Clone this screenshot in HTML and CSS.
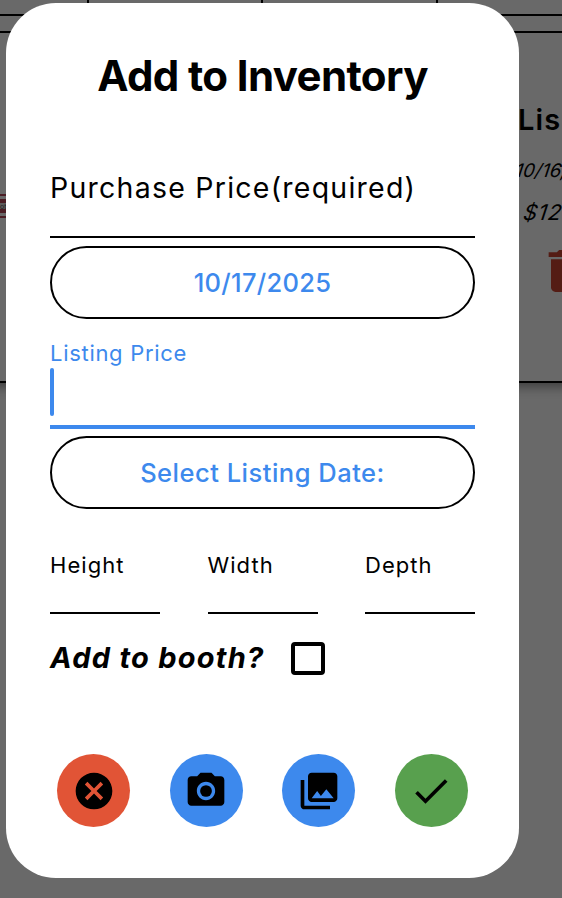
FILE: index.html
```html
<!DOCTYPE html>
<html lang="en">
<head>
<meta charset="utf-8">
<title>Add to Inventory</title>
<link rel="stylesheet" href="styles.css">
</head>
<body>
<div class="page">
  <div class="tabs"><div class="tab"></div><div class="tab"></div><div class="tab"></div><div class="tab"></div></div>
  <div class="card">
    <div class="thumb"><span class="thumb-text">ot</span></div>
    <div class="listing">
      <div class="listing-title">Lis</div>
      <div class="listing-date">10/16,</div>
      <div class="listing-price">$12</div>
      <svg class="trash" viewBox="0 0 24 24"><path d="M6 19c0 1.100.9 2 2 2h8c1.100 0 2-.9 2-2V7H6v12zM19 4h-3.500l-1-1h-5l-1 1H5v2h14V4z"/></svg>
    </div>
  </div>
</div>
<main class="dialog">
  <h1 class="title"><span>Add to Inventory</span></h1>
  <div class="field field-purchase"><span class="label-large">Purchase Price(required)</span></div>
  <button class="pill"><span class="date">10/17/2025</span></button>
  <div class="field field-listing"><span class="label-small">Listing Price</span><div class="caret"></div></div>
  <button class="pill"><span class="select">Select Listing Date:</span></button>
  <div class="dimensions">
    <div class="dim"><span class="height">Height</span></div>
    <div class="dim"><span class="width">Width</span></div>
    <div class="dim"><span class="depth">Depth</span></div>
  </div>
  <div class="booth"><span class="booth-label">Add to booth?</span><span class="checkbox"></span></div>
  <div class="actions">
    <button class="action red"><svg viewBox="0 0 24 24"><path d="M12 2C6.470 2 2 6.470 2 12s4.470 10 10 10 10-4.470 10-10S17.530 2 12 2zm5 13.590L15.590 17 12 13.410 8.410 17 7 15.590 10.590 12 7 8.410 8.410 7 12 10.590 15.590 7 17 8.410 13.410 12 17 15.590z"/></svg></button>
    <button class="action blue"><svg viewBox="0 0 24 24"><circle cx="12" cy="12" r="3.200"/><path d="M9 2L7.170 4H4c-1.100 0-2 .9-2 2v12c0 1.100.9 2 2 2h16c1.100 0 2-.9 2-2V6c0-1.100-.9-2-2-2h-3.170L15 2H9zm3 15c-2.760 0-5-2.240-5-5s2.240-5 5-5 5 2.240 5 5-2.240 5-5 5z"/></svg></button>
    <button class="action blue"><svg viewBox="0 0 24 24"><path d="M22 16V4c0-1.100-.9-2-2-2H8c-1.100 0-2 .9-2 2v12c0 1.100.9 2 2 2h12c1.100 0 2-.9 2-2zm-11-4l2.030 2.710L16 11l4 5H8l3-4zM2 6v14c0 1.100.9 2 2 2h14v-2H4V6H2z"/></svg></button>
    <button class="action green"><svg viewBox="0 0 24 24"><path d="M9 16.170L4.830 12l-1.420 1.410L9 19 21 7l-1.410-1.410z"/></svg></button>
  </div>
</main>
</body>
</html>
```
FILE: styles.css
```css
* { box-sizing: border-box; }
body { margin: 0; width: 562px; height: 898px; overflow: hidden; background: #696969; font-family: Inter, "Liberation Sans", sans-serif; color: #000; }
.page { width: 562px; height: 898px; overflow: hidden; }
.tabs { display: grid; grid-template-columns: 89px 174px 175px 1fr; height: 16px; border-bottom: 2px solid #000; }
.tab { border-right: 2px solid #000; }
.tab:last-child { border-right: 0; }
.card { display: flex; justify-content: space-between; margin: 15px -20px 0; padding: 0 20px; height: 352px; border-top: 2px solid #000; border-bottom: 2px solid #000; box-shadow: 0 10px 10px -6px rgba(0,0,0,.4); }
.thumb { width: 10px; height: 25px; margin-top: 161px; font-size: 7px; line-height: 7px; background: linear-gradient(#4b1d24 0 2px, #696969 2px 5px, #4b1d24 5px 9px, #5c5c5c 9px 15px, #4b1d24 15px 19px, #696969 19px 22px, #4b1d24 22px 24px, #696969 24px); }
.thumb-text { display: block; padding-top: 9px; color: #222; }
.listing { width: 44px; padding-top: 69px; white-space: nowrap; display: flex; flex-direction: column; }
.listing-title { font-size: 29px; font-weight: 600; line-height: 36px; letter-spacing: 1.1px; }
.listing-date { margin: 20px 0 0 -2px; font-size: 18.500px; line-height: 24px; letter-spacing: .3px; transform: skewX(-18deg); }
.listing-price { margin: 18px 0 0 6px; font-size: 21.500px; line-height: 24px; letter-spacing: 1.1px; transform: skewX(-18deg); }
.trash { width: 56px; height: 56px; margin: 19px 0 0 19px; fill: #541c14; flex: none; }
.dialog { position: absolute; left: 6px; top: 3px; width: 513px; height: 875px; border-radius: 50px; background: #fff; padding: 44px 44px 0; display: flex; flex-direction: column; }
.title { margin: 0; height: 60px; line-height: 58px; font-size: 42px; font-weight: 700; letter-spacing: -.62px; text-align: center; white-space: nowrap; }
.field { white-space: nowrap; flex: none; }
.field-purchase { height: 94px; margin-top: 37px; border-bottom: 2px solid #000; margin-bottom: 8px; }
.label-large { display: inline-block; margin-top: 26px; font-size: 28.500px; line-height: 36px; letter-spacing: 1.24px; }
.pill { display: flex; flex: none; align-items: center; justify-content: center; width: 425px; height: 73px; padding: 0; border: 2px solid #000; border-radius: 37px; background: #fff; color: #3d89ed; font: 500 25.500px Inter, sans-serif; }
.date { letter-spacing: .3px; }
.select { letter-spacing: .5px; }
.field-listing { height: 110px; border-bottom: 4px solid #3d89ed; margin-bottom: 7px; color: #3d89ed; }
.label-small { display: block; padding-top: 20px; line-height: 28px; font-size: 22px; letter-spacing: .7px; }
.caret { width: 4px; height: 48px; margin-top: 1px; border-radius: 2px; background: #3d89ed; }
.dimensions { display: grid; grid-template-columns: repeat(3, 110px); justify-content: space-between; margin-top: 32px; height: 73px; flex: none; }
.dim { border-bottom: 2px solid #000; padding-top: 10px; font-size: 22px; line-height: 28px; letter-spacing: 1.05px; }
.booth { display: flex; align-items: center; height: 34px; margin-top: 27px; flex: none; }
.booth-label { width: 241px; white-space: nowrap; font-size: 29px; line-height: 34px; font-weight: 700; font-style: italic; letter-spacing: 1.25px; }
.checkbox { width: 34px; height: 33px; border: 4px solid #000; border-radius: 4px; }
.actions { display: flex; justify-content: space-between; margin-top: 79px; padding: 0 7px; }
.action { display: grid; place-items: center; width: 73px; height: 73px; border: 0; border-radius: 50%; padding: 0; }
.action svg { width: 44px; height: 44px; fill: #000; }
.red { background: #e15436; }
.blue { background: #3d89ed; }
.green { background: #58a04e; }
```
